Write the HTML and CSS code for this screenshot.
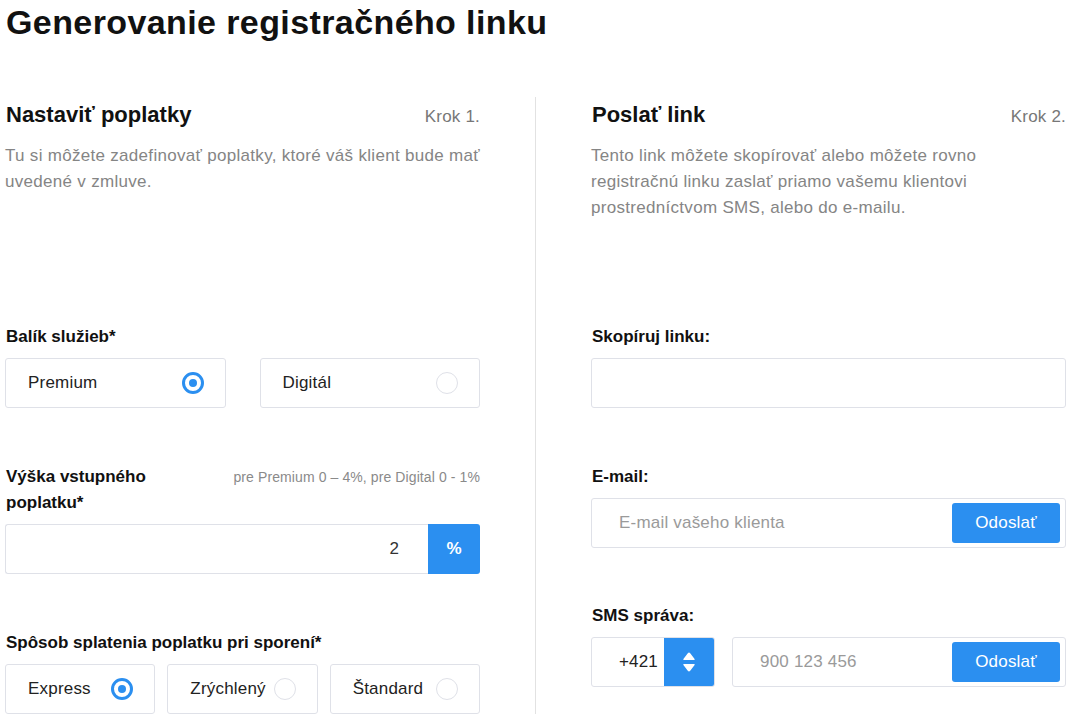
FILE: index.html
```html
<!DOCTYPE html>
<html lang="sk">
<head>
  <meta charset="UTF-8">
  <title>Generovanie registračného linku</title>
  <link rel="stylesheet" href="styles.css">
</head>
<body>

  <h1>Generovanie registračného linku</h1>

  <div class="steps">
    <div class="step">
      <div class="step-head">
        <div class="step-title">
          <h2>Nastaviť poplatky</h2>
          <span class="step-no">Krok 1.</span>
        </div>
        <p class="step-desc">Tu si môžete zadefinovať poplatky, ktoré váš klient bude mať uvedené v zmluve.</p>
      </div>

      <div class="field field-package">
        <div class="label">Balík služieb*</div>
        <div class="options options-two">
          <label class="option">Premium <span class="radio checked"></span></label>
          <label class="option">Digitál <span class="radio"></span></label>
        </div>
      </div>

      <div class="field field-fee">
        <div class="label-row">
          <div class="label label-narrow">Výška vstupného poplatku*</div>
          <div class="hint">pre Premium 0 – 4%, pre Digital 0 - 1%</div>
        </div>
        <div class="input-group">
          <input type="text" class="input input-num" value="2">
          <span class="addon">%</span>
        </div>
      </div>

      <div class="field">
        <div class="label">Spôsob splatenia poplatku pri sporení*</div>
        <div class="options options-three">
          <label class="option">Express <span class="radio checked"></span></label>
          <label class="option">Zrýchlený <span class="radio"></span></label>
          <label class="option">Štandard <span class="radio"></span></label>
        </div>
      </div>
    </div>

    <div class="divider"></div>

    <div class="step">
      <div class="step-head">
        <div class="step-title">
          <h2>Poslať link</h2>
          <span class="step-no">Krok 2.</span>
        </div>
        <p class="step-desc narrow">Tento link môžete skopírovať alebo môžete rovno registračnú linku zaslať priamo vašemu klientovi prostredníctvom SMS, alebo do e-mailu.</p>
      </div>

      <div class="field field-link">
        <div class="label">Skopíruj linku:</div>
        <input type="text" class="input">
      </div>

      <div class="field field-email">
        <div class="label">E-mail:</div>
        <div class="send-box">
          <input type="text" class="send-input" placeholder="E-mail vašeho klienta">
          <button class="btn">Odoslať</button>
        </div>
      </div>

      <div class="field">
        <div class="label">SMS správa:</div>
        <div class="sms-row">
          <div class="prefix">
            <span class="prefix-val">+421</span>
            <span class="prefix-arrows">
              <svg width="14" height="22" viewBox="0 0 14 22">
                <path d="M7 1.5 Q7.6 1.5 8.2 2.3 L12.6 8 Q13.2 9 12 9 H2 Q0.8 9 1.4 8 L5.8 2.3 Q6.4 1.5 7 1.5 Z" fill="#fff"/>
                <path d="M7 20.5 Q7.6 20.5 8.2 19.7 L12.6 14 Q13.2 13 12 13 H2 Q0.8 13 1.4 14 L5.8 19.7 Q6.4 20.5 7 20.5 Z" fill="#fff"/>
              </svg>
            </span>
          </div>
          <div class="send-box phone-box">
            <input type="text" class="send-input" placeholder="900 123 456">
            <button class="btn">Odoslať</button>
          </div>
        </div>
      </div>
    </div>
  </div>

</body>
</html>
```

FILE: styles.css
```css
* {
  margin: 0;
  padding: 0;
  box-sizing: border-box;
}
body {
  font-family: 'Liberation Sans', Arial, Helvetica, sans-serif;
  color: #111;
  background: #fff;
  padding: 0 6px 0 5px;
}
h1 {
  font-size: 34px;
  line-height: 44px;
  letter-spacing: 0.4px;
  font-weight: bold;
  padding-left: 1px;
}
.steps {
  display: flex;
  margin-top: 53px;
}
.step {
  width: 475px;
}
.divider {
  width: 1px;
  background: #e2e2e2;
  margin: 0 55px;
}
.step-head {
  min-height: 227px;
}
.step-title {
  display: flex;
  justify-content: space-between;
  align-items: baseline;
}
h2 {
  font-size: 22px;
  line-height: 36px;
  font-weight: bold;
  padding-left: 1px;
}
.step-no {
  font-size: 17px;
  letter-spacing: 0.2px;
  color: #777;
}
.step-desc {
  margin-top: 10px;
  font-size: 17px;
  letter-spacing: 0.3px;
  line-height: 26px;
  color: #858585;
}
.step-desc.narrow {
  max-width: 420px;
}
.label {
  font-size: 17px;
  line-height: 26px;
  font-weight: bold;
  padding-left: 1px;
}
.label-row {
  display: flex;
  justify-content: space-between;
  align-items: flex-start;
}
.label-narrow {
  width: 175px;
}
.hint {
  font-size: 14px;
  line-height: 26px;
  letter-spacing: 0.1px;
  color: #8a8a8a;
}
.field {
  display: flex;
  flex-direction: column;
  gap: 8px;
}
.field-package,
.field-link {
  margin-bottom: 56px;
}
.field-fee {
  margin-bottom: 56px;
}
.field-email {
  margin-bottom: 55px;
}
.options {
  display: grid;
}
.options-two {
  grid-template-columns: 1fr 1fr;
  gap: 34px;
}
.options-three {
  grid-template-columns: 1fr 1fr 1fr;
  gap: 12px;
}
.option {
  height: 50px;
  border: 1px solid #dfe1e8;
  border-radius: 3px;
  display: flex;
  align-items: center;
  justify-content: space-between;
  padding: 0 21px 0 22px;
  font-size: 17px;
  letter-spacing: 0.2px;
  color: #222;
}
.radio {
  width: 22px;
  height: 22px;
  border-radius: 50%;
  border: 1px solid #dfe1e8;
  flex-shrink: 0;
}
.radio.checked {
  border: 3px solid #2b8ff0;
  display: flex;
  align-items: center;
  justify-content: center;
}
.radio.checked::after {
  content: "";
  width: 8px;
  height: 8px;
  border-radius: 50%;
  background: #2b8ff0;
}
.input {
  width: 100%;
  height: 50px;
  border: 1px solid #dfe1e8;
  border-radius: 3px;
  font-family: inherit;
  font-size: 17px;
  color: #333;
  padding: 0 22px;
  outline: none;
}
.input-group {
  display: flex;
  height: 50px;
}
.input-group .input {
  border-radius: 3px 0 0 3px;
  border-right: none;
}
.input-num {
  text-align: right;
  padding-right: 29px;
}
.addon {
  width: 52px;
  flex-shrink: 0;
  background: #2b8ff0;
  color: #fff;
  font-weight: bold;
  font-size: 17px;
  display: flex;
  align-items: center;
  justify-content: center;
  border-radius: 0 3px 3px 0;
}
.send-box {
  height: 50px;
  border: 1px solid #dfe1e8;
  border-radius: 3px;
  display: flex;
  align-items: center;
  padding: 0 5px 0 27px;
}
.phone-box {
  flex: 1;
  min-width: 0;
}
.send-input {
  flex: 1;
  min-width: 0;
  width: 100%;
  border: none;
  outline: none;
  font-family: inherit;
  font-size: 17px;
  letter-spacing: 0.2px;
  color: #333;
}
.send-input::placeholder {
  color: #9a9a9a;
}
.btn {
  width: 108px;
  height: 40px;
  flex-shrink: 0;
  background: #2b8ff0;
  color: #fff;
  border: none;
  border-radius: 3px;
  font-family: inherit;
  font-size: 17px;
  letter-spacing: 0.2px;
  cursor: pointer;
}
.sms-row {
  display: flex;
  gap: 17px;
}
.prefix {
  width: 124px;
  height: 50px;
  flex-shrink: 0;
  display: flex;
  border: 1px solid #dfe1e8;
  border-radius: 3px;
  overflow: hidden;
}
.prefix-val {
  flex: 1;
  display: flex;
  align-items: center;
  justify-content: flex-end;
  padding-right: 6px;
  font-size: 17px;
  letter-spacing: 0.2px;
  color: #222;
}
.prefix-arrows {
  width: 50px;
  background: #2b8ff0;
  display: flex;
  align-items: center;
  justify-content: center;
}
```
